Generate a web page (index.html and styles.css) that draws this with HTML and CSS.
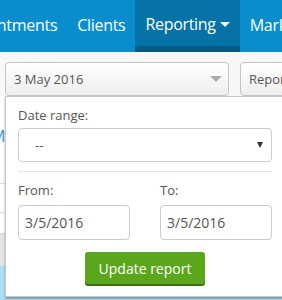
FILE: index.html
```html
<!DOCTYPE html>
<html>
<head>
<meta charset="utf-8">
<link rel="stylesheet" href="styles.css">
</head>
<body>
<nav class="nav">
  <a class="nav-item first">Appointments</a>
  <a class="nav-item">Clients</a>
  <a class="nav-item active">Reporting<span class="nav-caret"></span></a>
  <a class="nav-item">Marketing</a>
</nav>
<div class="toolbar">
  <div class="picker date">3 May 2016<span class="picker-caret"></span></div>
  <div class="picker kind">Reports</div>
</div>
<div class="content">
  <div class="row row-a"><span class="day">M</span></div>
  <div class="row row-b"></div>
  <div class="row row-c"></div>
  <div class="row row-d"></div>
  <div class="row row-e"></div>
</div>
<div class="popover">
  <div class="form">
    <div class="label">Date range:</div>
    <div class="select"><span>--</span><span class="select-caret"></span></div>
    <div class="divider"></div>
    <div class="cols">
      <div class="col">
        <div class="label">From:</div>
        <div class="input">3/5/2016</div>
      </div>
      <div class="col">
        <div class="label">To:</div>
        <div class="input">3/5/2016</div>
      </div>
    </div>
    <div class="actions"><button class="btn">Update report</button></div>
  </div>
</div>
</body>
</html>
```
FILE: styles.css
```css
html, body {
  margin: 0;
  padding: 0;
}
body {
  width: 282px;
  height: 300px;
  overflow: hidden;
  position: relative;
  font-family: "Open Sans", "DejaVu Sans", sans-serif;
  background: #fff;
  color: #555;
}
.nav {
  display: flex;
  height: 52px;
  background: #0a8dcd;
  margin-left: -55px;
  white-space: nowrap;
}
.nav-item {
  display: flex;
  align-items: center;
  padding: 0 10px 2px 10px;
  color: #fff;
  font-size: 16px;
  letter-spacing: -0.3px;
  height: 52px;
  box-sizing: border-box;
  flex: none;
}
.nav-item.active {
  background: #0673a8;
  border-bottom: 6px solid #035a85;
  padding-top: 4px;
  padding-right: 10px;
}
.nav-caret {
  display: inline-block;
  width: 0;
  height: 0;
  margin-left: 4px;
  margin-top: 1px;
  border-left: 5px solid transparent;
  border-right: 5px solid transparent;
  border-top: 5px solid #fff;
}
.toolbar {
  display: flex;
  gap: 11px;
  padding: 10px 0 0 5px;
  background: #f7f7f7;
}
.picker {
  height: 34px;
  box-sizing: border-box;
  border: 1px solid #c4c4c4;
  border-radius: 4px;
  background: linear-gradient(#ffffff, #eeeeee);
  display: flex;
  align-items: center;
  padding-left: 8px;
  font-size: 13px;
  color: #555;
  flex: none;
}
.picker.date {
  width: 224px;
  justify-content: space-between;
  padding-right: 6px;
}
.picker.kind {
  width: 120px;
}
.picker-caret {
  width: 0;
  height: 0;
  border-left: 6px solid transparent;
  border-right: 6px solid transparent;
  border-top: 6px solid #aaa;
}
.content {
  display: flex;
  flex-direction: column;
}
.row-a {
  height: 87px;
  border-bottom: 1px solid #ddd;
  position: relative;
}
.day {
  display: block;
  margin: 29px 0 0 -9px;
  font-size: 16px;
  color: #3c8fd2;
}
.row-b {
  height: 28px;
  border-bottom: 1px solid #ddd;
}
.row-c {
  height: 20px;
}
.row-d {
  height: 32px;
  background: #e4e4e4;
  border-top: 1px solid #d8d8d8;
}
.row-e {
  height: 40px;
  background: #abdff6;
}
.popover {
  position: absolute;
  left: 5px;
  top: 96px;
  width: 290px;
  height: 201px;
  box-sizing: border-box;
  background: #fff;
  border: 1px solid #c8c8c8;
  box-shadow: 0 2px 2px rgba(60, 70, 80, 0.45);
  padding: 8px 12px;
}
.form {
  width: 254px;
}
.label {
  font-size: 13px;
  line-height: 20px;
  color: #555;
}
.select {
  margin-top: 3px;
  height: 34px;
  box-sizing: border-box;
  border: 1px solid #ccc;
  border-radius: 4px;
  display: flex;
  align-items: center;
  justify-content: space-between;
  padding: 0 8px 0 16px;
  font-size: 13px;
  color: #555;
}
.select-caret {
  width: 0;
  height: 0;
  border-left: 3px solid transparent;
  border-right: 3px solid transparent;
  border-top: 6px solid #333;
}
.divider {
  margin-top: 9px;
  height: 1px;
  background: #e3e3e3;
}
.cols {
  display: grid;
  grid-template-columns: 112px 112px;
  column-gap: 30px;
  margin-top: 8px;
}
.input {
  margin-top: 5px;
  height: 35px;
  box-sizing: border-box;
  border: 1px solid #ccc;
  border-radius: 4px;
  display: flex;
  align-items: center;
  padding-left: 6px;
  font-size: 14px;
  color: #555;
}
.actions {
  display: flex;
  justify-content: center;
  margin-top: 12px;
}
.btn {
  width: 120px;
  height: 32px;
  border: none;
  border-radius: 3px;
  background: #5ba71c;
  box-shadow: 0 2px 0 #3d6f17;
  color: #fff;
  font-family: "Open Sans", "DejaVu Sans", sans-serif;
  font-size: 14px;
  padding: 0;
}
```
